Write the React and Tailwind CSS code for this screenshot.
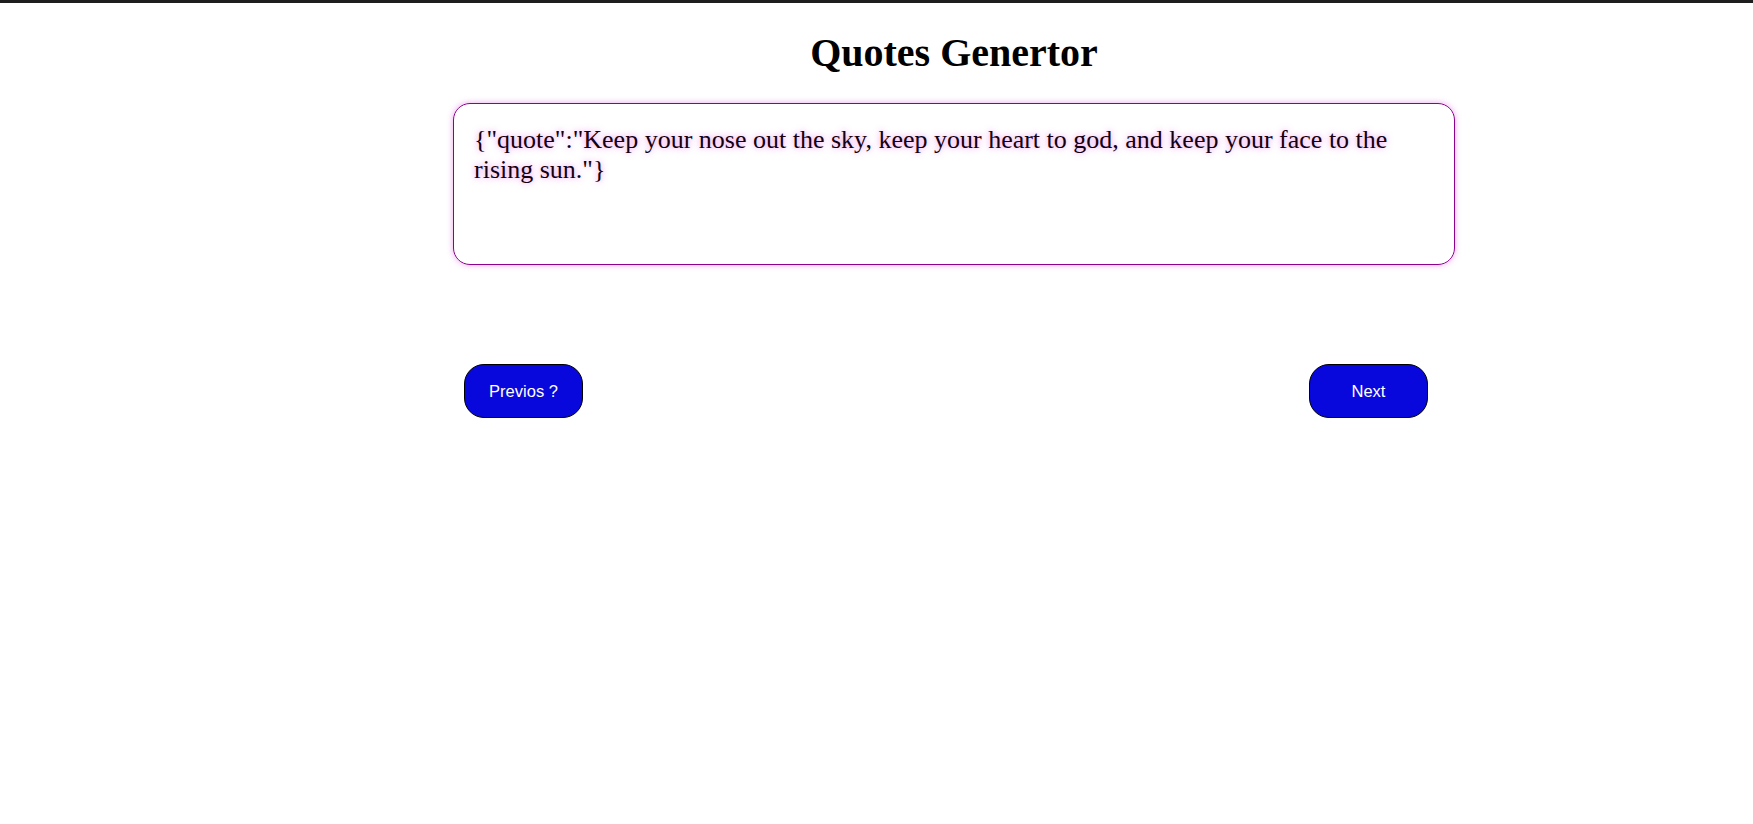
import React, { useState } from 'react';

const quotes = [
  'Keep your nose out the sky, keep your heart to god, and keep your face to the rising sun.',
  'The only way to do great work is to love what you do.',
  'Stay hungry, stay foolish.',
];

export default function App() {
  const [index, setIndex] = useState(0);

  const prev = () => setIndex((i) => (i - 1 + quotes.length) % quotes.length);
  const next = () => setIndex((i) => (i + 1) % quotes.length);

  return (
    <div className="min-h-screen bg-white border-t-[3px] border-[#1e1e1e] font-['Liberation_Serif',serif]">
      <div className="ml-[453px] w-[1002px] flex flex-col">
        <h1 className="text-center text-[40px] font-bold text-black mt-[27px] leading-[46px]">
          Quotes Genertor
        </h1>
        <div className="mt-[27px] h-[162px] rounded-[17px] border border-[#8e008e] shadow-[0_0_6px_rgba(200,0,200,0.35)] px-[20px] pt-[21px]">
          <p className="text-[26px] leading-[30px] text-[#140010] [text-shadow:0_0_6px_rgba(220,60,220,0.6)]">
            {JSON.stringify({ quote: quotes[index] })}
          </p>
        </div>
        <div className="mt-[99px] flex justify-between pl-[11px] pr-[27px]">
          <button
            onClick={prev}
            className="w-[119px] h-[54px] rounded-[20px] border border-black bg-[#0808dc] text-white text-[16.5px] font-['Liberation_Sans',Arial,sans-serif]"
          >
            Previos ?
          </button>
          <button
            onClick={next}
            className="w-[119px] h-[54px] rounded-[20px] border border-black bg-[#0808dc] text-white text-[16.5px] font-['Liberation_Sans',Arial,sans-serif]"
          >
            Next
          </button>
        </div>
      </div>
    </div>
  );
}
